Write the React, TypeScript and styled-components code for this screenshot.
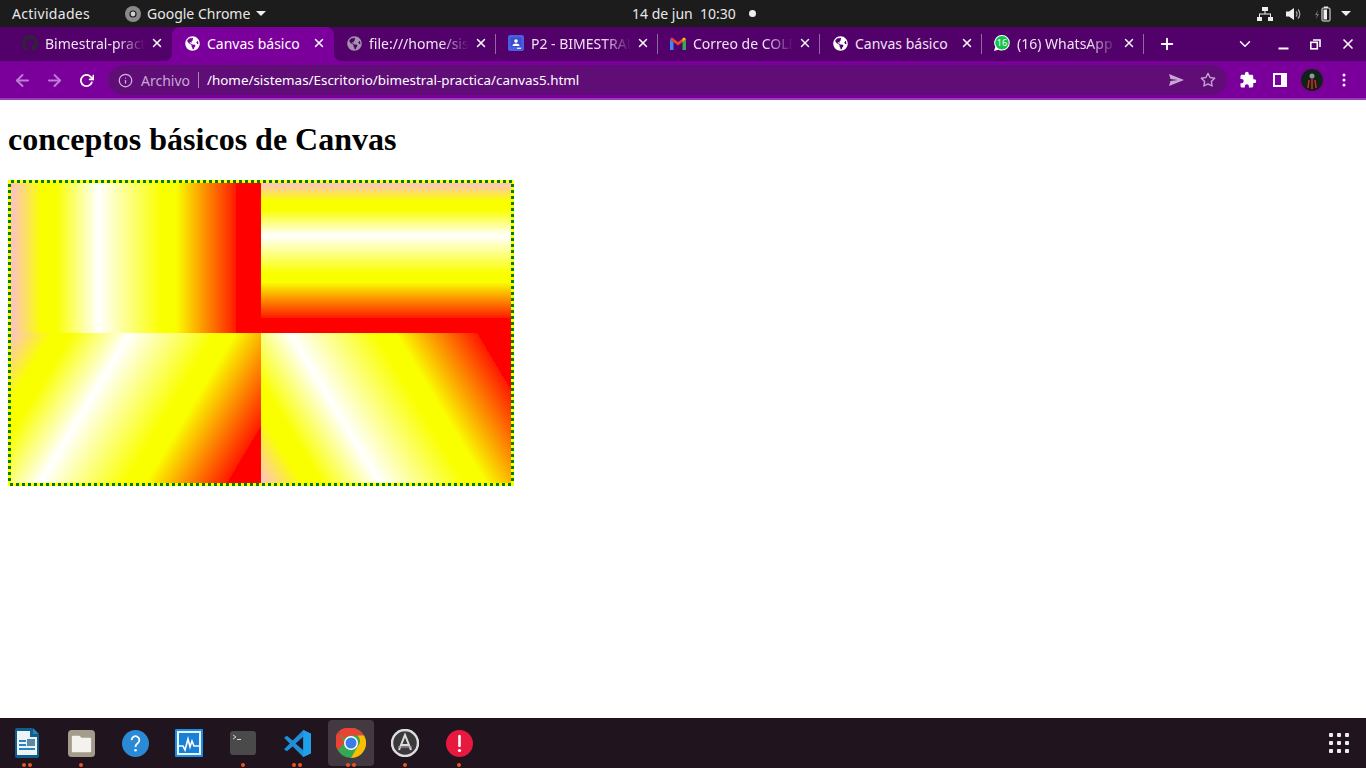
import React from 'react'
import styled, { createGlobalStyle } from 'styled-components'
import { FaGithub, FaGlobeAmericas } from 'react-icons/fa'
import { MdExtension } from 'react-icons/md'
import { FiArrowLeft, FiArrowRight, FiRotateCw, FiInfo, FiStar, FiX, FiPlus, FiChevronDown } from 'react-icons/fi'

const GlobalStyle = createGlobalStyle`
  html, body {
    margin: 0;
    padding: 0;
    height: 768px;
    overflow: hidden;
    background: #fff;
  }
`

// the gradient stops hard at 90%, what is past it stays pure red
const STOPS = 'pink 0, #faff00 12%, #faff00 18%, #fff 35%, #faff00 60%, #faff00 66%, #ff1a00 90%, red 90%, red 100%'

const Screen = styled.div`
  width: 1366px;
  height: 768px;
  display: flex;
  flex-direction: column;
  font-family: 'Noto Sans', sans-serif;
`

const TopBar = styled.div`
  height: 27px;
  background: #1c1c1c;
  color: #e8e8e8;
  display: flex;
  align-items: center;
  font-size: 14px;
  padding-left: 12px;
`

const Activities = styled.span`
  width: 113px;
  letter-spacing: 0.3px;
`

const AppMenu = styled.div`
  width: 507px;
  display: flex;
  align-items: center;
  gap: 6px;
`

const Clock = styled.span`
  white-space: pre;
`

const StatusDot = styled.span`
  width: 7px;
  height: 7px;
  border-radius: 50%;
  background: #eee;
  margin-left: 13px;
`

const Tray = styled.div`
  margin-left: auto;
  display: flex;
  align-items: center;
  gap: 13px;
  padding-right: 15px;
`

const Caret = styled.span`
  width: 0;
  height: 0;
  border-left: 5px solid transparent;
  border-right: 5px solid transparent;
  border-top: 5px solid #eee;
`

const TrayCaret = styled(Caret)`
  margin-left: -3px;
`

const TabStrip = styled.div`
  height: 34px;
  background: #52006a;
  display: flex;
  padding-left: 10px;
  color: #f0e4f4;
  font-size: 14px;
`

const Tab = styled.div<{ $active?: boolean; $noDivider?: boolean }>`
  width: 162px;
  height: 34px;
  box-sizing: border-box;
  position: relative;
  display: flex;
  align-items: center;
  padding: 0 0 2px 12px;
  background: ${(p) => (p.$active ? '#7b009b' : 'transparent')};
  border-radius: 8px 8px 0 0;
  color: ${(p) => (p.$active ? '#fff' : '#f0e4f4')};
  &::after {
    content: '';
    display: ${(p) => (p.$noDivider ? 'none' : 'block')};
    position: absolute;
    right: 0;
    top: 7px;
    height: 20px;
    width: 1px;
    background: #96669f;
  }
  ${(p) =>
    p.$active
      ? `
    &::before, &::after {
      content: '';
      display: block;
      position: absolute;
      top: auto;
      bottom: 0;
      width: 8px;
      height: 8px;
    }
    &::before {
      left: -8px;
      right: auto;
      background: radial-gradient(circle at 0 0, transparent 8px, #7b009b 8.5px);
    }
    &::after {
      right: -8px;
      background: radial-gradient(circle at 100% 0, transparent 8px, #7b009b 8.5px);
    }
  `
      : ''}
`

const TabIconSlot = styled.span`
  width: 16px;
  height: 16px;
  flex: none;
  display: flex;
  align-items: center;
  justify-content: center;
`

const TabTitle = styled.span<{ $fade?: boolean }>`
  margin-left: 7px;
  width: 100px;
  flex: none;
  white-space: nowrap;
  overflow: hidden;
  ${(p) =>
    p.$fade
      ? `-webkit-mask-image: linear-gradient(90deg, #000 72%, transparent 100%);
         mask-image: linear-gradient(90deg, #000 72%, transparent 100%);`
      : ''}
`

const TabClose = styled.span`
  margin-left: 5px;
  display: flex;
  color: #fff;
`

const StripButton = styled.span<{ $gap: number }>`
  margin-left: ${(p) => p.$gap}px;
  width: 20px;
  display: flex;
  align-items: center;
  justify-content: center;
  color: #fff;
`

const Toolbar = styled.div`
  height: 39px;
  box-sizing: border-box;
  background: #7b009b;
  border-bottom: 2px solid #9a3cb2;
  display: flex;
  align-items: flex-start;
  padding: 4px 0 0 6px;
`

const NavButton = styled.span<{ $dim?: boolean }>`
  width: 32px;
  height: 30px;
  flex: none;
  display: flex;
  align-items: center;
  justify-content: center;
  color: ${(p) => (p.$dim ? '#bd7dd2' : '#fff')};
`

const Omnibox = styled.div`
  width: 1119px;
  height: 30px;
  margin: 0 5px 0 6px;
  border-radius: 15px;
  background: #600d78;
  display: flex;
  align-items: center;
  padding-left: 10px;
  box-sizing: border-box;
  font-size: 13.4px;
`

const Scheme = styled.span`
  margin-left: 8px;
  font-size: 14px;
  color: #c6a9d0;
`

const Divider = styled.span`
  width: 1px;
  height: 16px;
  background: #a585b0;
  margin: 0 8px;
`

const Url = styled.span`
  color: #fff;
`

const OmniEnd = styled.div`
  margin-left: auto;
  display: flex;
  align-items: center;
  gap: 16px;
  padding-right: 11px;
  color: #c6a9d0;
`

const Page = styled.main`
  flex: 1;
  background: #fff;
  padding: 0 8px;
  overflow: hidden;
`

const Heading = styled.h1`
  font-family: 'Liberation Serif', serif;
  font-size: 32px;
  font-weight: 700;
  line-height: 37px;
  margin: 21.44px 0;
  color: #000;
`

// dotted border of the canvas, 3px squares, a plain dotted border comes out round
const CanvasFrame = styled.div`
  width: 500px;
  height: 300px;
  padding: 3px;
  background-color: yellow;
  background-repeat: no-repeat;
  background-image:
    repeating-linear-gradient(90deg, yellow 0 3px, green 3px 6px),
    repeating-linear-gradient(90deg, yellow 0 2px, green 2px 5px, yellow 5px 6px),
    repeating-linear-gradient(180deg, green 0 1px, yellow 1px 4px, green 4px 6px),
    repeating-linear-gradient(180deg, green 0 1px, yellow 1px 4px, green 4px 6px);
  background-size: 100% 3px, 100% 3px, 3px 100%, 3px 100%;
  background-position: 0 0, 0 100%, 0 0, 100% 0;
  display: grid;
  grid-template-columns: 250px 250px;
  grid-template-rows: 150px 150px;
`

const Swatch = styled.div<{ $angle: string }>`
  background: linear-gradient(${(p) => p.$angle}, ${STOPS});
`

const Dock = styled.div`
  height: 50px;
  background: #20141f;
  display: flex;
  align-items: center;
  padding-right: 17px;
`

const DockItem = styled.div<{ $active?: boolean }>`
  width: 54px;
  height: 50px;
  flex: none;
  position: relative;
  display: flex;
  align-items: center;
  justify-content: center;
  &::before {
    content: '';
    display: ${(p) => (p.$active ? 'block' : 'none')};
    position: absolute;
    left: 4px;
    top: 2px;
    width: 46px;
    height: 46px;
    border-radius: 4px;
    background: #423a40;
  }
  svg {
    position: relative;
  }
`

const Pips = styled.div`
  position: absolute;
  left: 0;
  right: 0;
  bottom: 1px;
  display: flex;
  justify-content: center;
  gap: 2px;
`

const Pip = styled.span`
  width: 4px;
  height: 4px;
  border-radius: 50%;
  background: #e95420;
`

const AppGrid = styled.div`
  margin-left: auto;
  display: grid;
  grid-template-columns: repeat(3, 4px);
  gap: 4px;
  width: 20px;
`

const GridDot = styled.span`
  width: 4px;
  height: 4px;
  background: #eee;
  border-radius: 1px;
`

const ChromeMono = () => (
  <svg width="16" height="16" viewBox="0 0 16 16">
    <circle cx="8" cy="8" r="8" fill="#8a8a8a" />
    <circle cx="8" cy="8" r="3.6" fill="#1c1c1c" />
    <circle cx="8" cy="8" r="2.4" fill="#cfcfcf" />
  </svg>
)

const NetworkIcon = () => (
  <svg width="16" height="14" viewBox="0 0 16 14" fill="#eee">
    <rect x="5" y="0" width="6" height="4" />
    <rect x="0" y="10" width="5" height="4" />
    <rect x="11" y="10" width="5" height="4" />
    <path d="M7.5 4h1v2.5H14V10h-1V7.5H3V10H2V6.500h5.500z" />
  </svg>
)

const VolumeIcon = () => (
  <svg width="16" height="14" viewBox="0 0 16 14">
    <path d="M0 4.500h3L8 1v12L3 9.500H0z" fill="#eee" />
    <path d="M10 4.500a3.500 3.500 0 0 1 0 5M12 2.500a6.500 6.500 0 0 1 0 9" stroke="#aaa" fill="none" strokeWidth="1.2" />
  </svg>
)

const BatteryIcon = () => (
  <svg width="16" height="16" viewBox="0 0 16 16">
    <path d="M3 4L0 9h2l-1 4 3-5H2z" fill="#777" />
    <rect x="7" y="2" width="8" height="13" rx="1" fill="none" stroke="#eee" strokeWidth="1" />
    <rect x="9" y="0.500" width="4" height="1.500" fill="#eee" />
    <rect x="8.500" y="3.500" width="3.500" height="10" fill="#eee" />
  </svg>
)

const GmailIcon = () => (
  <svg width="16" height="13" viewBox="0 0 16 13">
    <path d="M0 2v11h3.500V5z" fill="#4285f4" />
    <path d="M12.500 5v8H16V2z" fill="#34a853" />
    <path d="M0 2l3.500 3L8 8.500 12.500 5 16 2 14 0.500 8 5 2 0.500z" fill="#ea4335" />
    <path d="M12.500 5L16 2 14 0.500 12.500 1.600z" fill="#fbbc04" />
  </svg>
)

const ClassroomIcon = () => (
  <svg width="16" height="16" viewBox="0 0 16 16">
    <rect width="16" height="16" rx="2" fill="#4a5fe8" />
    <rect x="2.500" y="2.500" width="11" height="9.500" fill="#3d50c9" />
    <circle cx="8" cy="6" r="1.800" fill="#fff" />
    <path d="M4.500 11c0-2 2-2.600 3.500-2.600s3.500.6 3.500 2.600z" fill="#fff" />
    <rect x="9" y="12.700" width="4" height="1.200" fill="#fff" />
  </svg>
)

const WhatsappBadge = () => (
  <svg width="16" height="16" viewBox="0 0 16 16">
    <path d="M8 0a7.800 7.800 0 0 1 0 15.600c-1.300 0-2.500-.3-3.600-.9L0 16l1.300-4.200A7.800 7.800 0 0 1 8 0z" fill="#fff" />
    <circle cx="8" cy="7.800" r="6.800" fill="#12c24c" />
    <text x="8" y="11" textAnchor="middle" fontSize="9" fill="#fff" fontFamily="Noto Sans, sans-serif">16</text>
  </svg>
)

const SendIcon = () => (
  <svg width="15" height="12" viewBox="0 0 15 12" fill="#c6a9d0">
    <path d="M0 0l15 6-15 6 1.500-5L9 6 1.500 5z" />
  </svg>
)

const SidePanelIcon = () => (
  <svg width="14" height="14" viewBox="0 0 14 14">
    <rect x="1" y="1" width="12" height="12" fill="none" stroke="#fff" strokeWidth="2" />
    <rect x="8" y="1" width="5" height="12" fill="#fff" />
  </svg>
)

const AvatarIcon = () => (
  <svg width="22" height="22" viewBox="0 0 22 22">
    <circle cx="11" cy="11" r="11" fill="#14201a" />
    <circle cx="11" cy="7" r="2.500" fill="#8d9a98" />
    <path d="M8 11l-1 8M11 10v10M14 11l1 8" stroke="#c93028" strokeWidth="1.500" />
  </svg>
)

const KebabIcon = () => (
  <svg width="4" height="14" viewBox="0 0 4 14" fill="#fff">
    <circle cx="2" cy="2" r="1.500" />
    <circle cx="2" cy="7" r="1.500" />
    <circle cx="2" cy="12" r="1.500" />
  </svg>
)

const MinimizeIcon = () => (
  <svg width="11" height="11" viewBox="0 0 11 11" fill="#fff">
    <rect x="0.500" y="8.500" width="10" height="2" />
  </svg>
)

const RestoreIcon = () => (
  <svg width="11" height="11" viewBox="0 0 11 11" fill="none" stroke="#fff" strokeWidth="1.600">
    <rect x="0.800" y="3.300" width="6.500" height="6.500" />
    <path d="M3 1h7v7" />
  </svg>
)

const WriterIcon = () => (
  <svg width="24" height="30" viewBox="0 0 24 30">
    <path d="M0 2a2 2 0 0 1 2-2h15l7 7v21a2 2 0 0 1-2 2H2a2 2 0 0 1-2-2z" fill="#0f5f8c" />
    <path d="M2 3h13v6h7v18H2z" fill="#eef3f7" />
    <path d="M18 0l6 6h-6z" fill="#1f86bd" />
    <path d="M4 12h7v2H4zm0 4h7v2H4zm0 4h16v2H4z" fill="#2a86b8" />
    <rect x="12" y="11" width="8" height="7" fill="#5b8aa8" />
  </svg>
)

const FilesIcon = () => (
  <svg width="27" height="27" viewBox="0 0 28 28">
    <rect width="28" height="28" rx="4" fill="#a49c8b" />
    <path d="M4 7a1 1 0 0 1 1-1h7l2 2h9a1 1 0 0 1 1 1v13a1 1 0 0 1-1 1H5a1 1 0 0 1-1-1z" fill="#f4f2ee" />
  </svg>
)

const HelpIcon = () => (
  <svg width="27" height="27" viewBox="0 0 28 28">
    <circle cx="14" cy="14" r="14" fill="#2b8ad6" />
    <path d="M10 10.500a4 4 0 1 1 6.200 3.300c-1.300.9-2.200 1.700-2.200 3.700" fill="none" stroke="#fff" strokeWidth="1.800" />
    <circle cx="14" cy="21" r="1.300" fill="#fff" />
  </svg>
)

const MonitorIcon = () => (
  <svg width="28" height="28" viewBox="0 0 28 28">
    <rect width="28" height="28" rx="1" fill="#1c8de8" />
    <rect x="2" y="2" width="24" height="24" fill="#e9f5fd" />
    <rect x="4" y="4" width="20" height="20" fill="#1a7fd6" />
    <path d="M4 17h4l2 4 3-11 2 8 2-6 2 5h5" fill="none" stroke="#fff" strokeWidth="1.600" />
  </svg>
)

const TerminalIcon = () => (
  <svg width="26" height="24" viewBox="0 0 26 24">
    <rect width="26" height="24" rx="3" fill="#4a4a4a" />
    <path d="M3 4l3 2-3 2" fill="none" stroke="#ddd" strokeWidth="0.900" />
    <rect x="7" y="8" width="4" height="1" fill="#ddd" />
  </svg>
)

const VSCodeIcon = () => (
  <svg width="27" height="27" viewBox="0 0 28 28">
    <path d="M20 0l8 4v20l-8 4-11-11-6 5-3-2 6-6-6-6 3-2 6 5z" fill="#1f8fd8" />
    <path d="M20 7l-8 7 8 7z" fill="#20141f" />
    <path d="M20 0l8 4v20l-8 4z" fill="#21a0ea" />
  </svg>
)

const ChromeIcon = () => (
  <svg width="30" height="30" viewBox="0 0 30 30">
    <circle cx="15" cy="15" r="15" fill="#34a853" />
    <path d="M15 0a15 15 0 0 1 13 7.500H15a7.500 7.500 0 0 0-6.500 3.800L2 3.900A15 15 0 0 1 15 0z" fill="#ea4335" />
    <path d="M28 7.500A15 15 0 0 1 15 30l6.500-11.300a7.500 7.500 0 0 0 0-11.200z" fill="#fbbc04" />
    <path d="M2 3.900L8.500 15 2 22A15 15 0 0 1 2 3.900z" fill="#ea4335" />
    <circle cx="15" cy="15" r="7" fill="#fff" />
    <circle cx="15" cy="15" r="5.500" fill="#3b7de8" />
  </svg>
)

const SoftwareIcon = () => (
  <svg width="28" height="28" viewBox="0 0 28 28">
    <circle cx="14" cy="14" r="13" fill="#3a3a3a" stroke="#ddd" strokeWidth="2.500" />
    <path d="M8 21l6-15 6 15M10 16h8" fill="none" stroke="#ddd" strokeWidth="2" />
    <path d="M7 18h14" stroke="#b08ab0" strokeWidth="1.200" />
  </svg>
)

const AlertIcon = () => (
  <svg width="27" height="27" viewBox="0 0 27 27">
    <circle cx="13.500" cy="13.500" r="13.500" fill="#e8193f" />
    <rect x="12.200" y="5" width="2.600" height="12" rx="1" fill="#fff" />
    <circle cx="13.500" cy="20.500" r="1.600" fill="#fff" />
  </svg>
)

const tabs = [
  { title: 'Bimestral-practica', icon: <FaGithub size={16} color="#2a2a2e" />, fade: true, noDivider: true },
  { title: 'Canvas básico', icon: <FaGlobeAmericas size={15} color="#fff" />, active: true },
  { title: 'file:///home/sistemas', icon: <FaGlobeAmericas size={15} color="#a592ad" />, fade: true },
  { title: 'P2 - BIMESTRAL', icon: <ClassroomIcon />, fade: true },
  { title: 'Correo de COLEGIO', icon: <GmailIcon />, fade: true },
  { title: 'Canvas básico', icon: <FaGlobeAmericas size={15} color="#fff" /> },
  { title: '(16) WhatsApp Web', icon: <WhatsappBadge />, fade: true },
]

const dockApps = [
  { icon: <WriterIcon />, pips: 2 },
  { icon: <FilesIcon />, pips: 1 },
  { icon: <HelpIcon />, pips: 0 },
  { icon: <MonitorIcon />, pips: 0 },
  { icon: <TerminalIcon />, pips: 1 },
  { icon: <VSCodeIcon />, pips: 2 },
  { icon: <ChromeIcon />, pips: 2, active: true },
  { icon: <SoftwareIcon />, pips: 1 },
  { icon: <AlertIcon />, pips: 1 },
]

const App: React.FC = () => {
  return (
    <>
      <GlobalStyle />
      <Screen>
        <TopBar>
          <Activities>Actividades</Activities>
          <AppMenu>
            <ChromeMono />
            <span>Google Chrome</span>
            <Caret />
          </AppMenu>
          <Clock>14 de jun  10:30</Clock>
          <StatusDot />
          <Tray>
            <NetworkIcon />
            <VolumeIcon />
            <BatteryIcon />
            <TrayCaret />
          </Tray>
        </TopBar>

        <TabStrip>
          {tabs.map((tab, i) => (
            <Tab key={i} $active={tab.active} $noDivider={tab.noDivider}>
              <TabIconSlot>{tab.icon}</TabIconSlot>
              <TabTitle $fade={tab.fade}>{tab.title}</TabTitle>
              <TabClose>
                <FiX size={14} strokeWidth={2.5} />
              </TabClose>
            </Tab>
          ))}
          <StripButton $gap={13}>
            <FiPlus size={18} strokeWidth={2.5} />
          </StripButton>
          <StripButton $gap={58}>
            <FiChevronDown size={18} />
          </StripButton>
          <StripButton $gap={18}>
            <MinimizeIcon />
          </StripButton>
          <StripButton $gap={12}>
            <RestoreIcon />
          </StripButton>
          <StripButton $gap={13}>
            <FiX size={16} strokeWidth={2.5} />
          </StripButton>
        </TabStrip>

        <Toolbar>
          <NavButton $dim>
            <FiArrowLeft size={19} strokeWidth={2.4} />
          </NavButton>
          <NavButton $dim>
            <FiArrowRight size={19} strokeWidth={2.4} />
          </NavButton>
          <NavButton>
            <FiRotateCw size={15} strokeWidth={2.8} />
          </NavButton>
          <Omnibox>
            <FiInfo size={15} color="#d0b8d8" />
            <Scheme>Archivo</Scheme>
            <Divider />
            <Url>/home/sistemas/Escritorio/bimestral-practica/canvas5.html</Url>
            <OmniEnd>
              <SendIcon />
              <FiStar size={16} />
            </OmniEnd>
          </Omnibox>
          <NavButton>
            <MdExtension size={18} />
          </NavButton>
          <NavButton>
            <SidePanelIcon />
          </NavButton>
          <NavButton>
            <AvatarIcon />
          </NavButton>
          <NavButton>
            <KebabIcon />
          </NavButton>
        </Toolbar>

        <Page>
          <Heading>conceptos básicos de Canvas</Heading>
          <CanvasFrame>
            <Swatch $angle="90deg" />
            <Swatch $angle="180deg" />
            <Swatch $angle="120.96deg" />
            <Swatch $angle="59.04deg" />
          </CanvasFrame>
        </Page>

        <Dock>
          {dockApps.map((app, i) => (
            <DockItem key={i} $active={app.active}>
              {app.icon}
              <Pips>
                {Array.from({ length: app.pips }).map((_, j) => (
                  <Pip key={j} />
                ))}
              </Pips>
            </DockItem>
          ))}
          <AppGrid>
            {Array.from({ length: 9 }).map((_, i) => (
              <GridDot key={i} />
            ))}
          </AppGrid>
        </Dock>
      </Screen>
    </>
  )
}

export default App
